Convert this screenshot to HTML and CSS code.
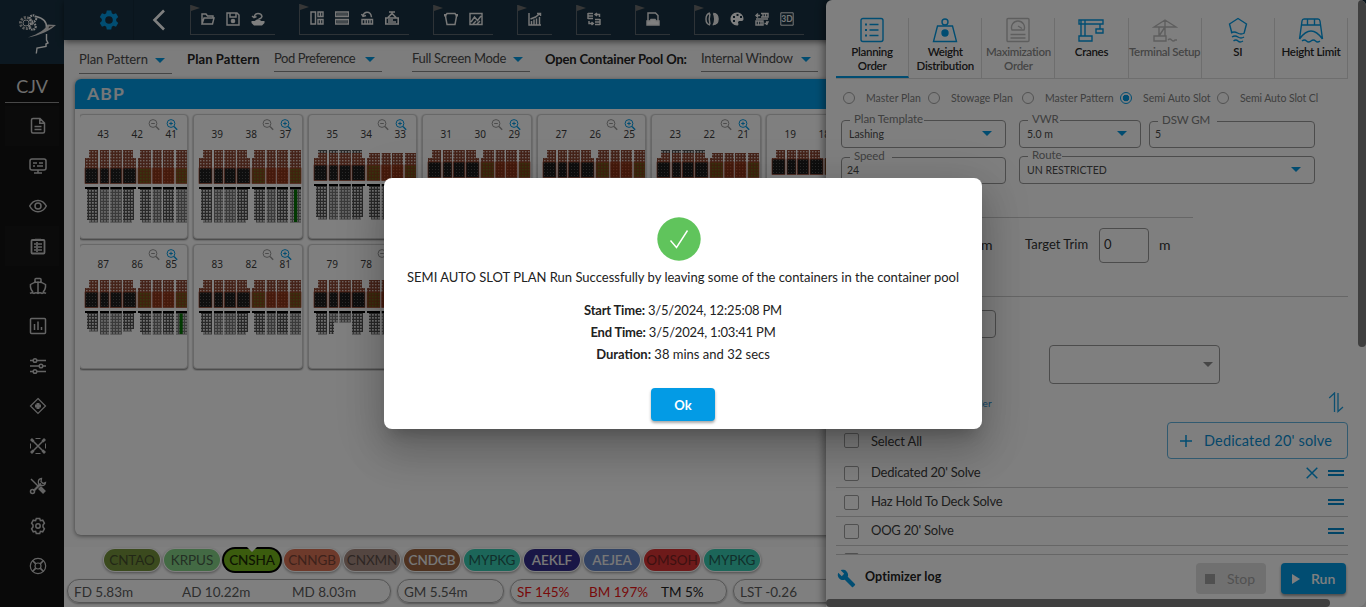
FILE: index.html
```html
<!DOCTYPE html>
<html lang="en">
<head>
<meta charset="utf-8">
<title>CJV Stowage Planner</title>
<link rel="stylesheet" href="styles.css">
</head>
<body>
<svg class="defs" width="0" height="0" aria-hidden="true">
  <defs>
    <pattern id="p-deck" width="3" height="3" patternUnits="userSpaceOnUse"><rect width="3" height="3" fill="#8a4633"/><rect x="1" y="1" width="1.5" height="1.4" fill="#dcc4bc"/></pattern>
    <pattern id="p-dark" width="3" height="3" patternUnits="userSpaceOnUse"><rect width="3" height="3" fill="#1e1e1e"/><rect x="1" y="1" width="1" height="1" fill="#545454"/></pattern>
    <pattern id="p-red" width="3" height="3" patternUnits="userSpaceOnUse"><rect width="3" height="3" fill="#8a3418"/><rect x="1" y="1" width="1.3" height="1.3" fill="#b4583c"/></pattern>
    <pattern id="p-green" width="3" height="3" patternUnits="userSpaceOnUse"><rect width="3" height="3" fill="#83451c"/><rect x="1" y="1" width="1.6" height="1.6" fill="#6c6c1c"/></pattern>
    <pattern id="p-hold" width="3" height="3" patternUnits="userSpaceOnUse"><rect width="3" height="3" fill="#505050"/><rect x="1" y="1" width="1.8" height="1.7" fill="#e0e0e0"/></pattern>
    <pattern id="p-hold2" width="3" height="3" patternUnits="userSpaceOnUse"><rect width="3" height="3" fill="#747474"/><rect x="1" y="1" width="1.9" height="1.8" fill="#cccccc"/></pattern>
  </defs>
</svg>
<div class="app">
  <aside class="side">
    <div class="logo">
      <svg width="40" height="42" viewBox="0 0 40 42" fill="none" stroke="#fff">
        <circle cx="8" cy="11" r="5.5" stroke-width="3" stroke-dasharray="2 1.3" stroke="#bbb"/><circle cx="8" cy="11" r="3" stroke="#ddd"/>
        <circle cx="15" cy="6.500" r="3.200" stroke-width="2.200" stroke-dasharray="1.600 .8"/><circle cx="14.500" cy="14.500" r="3.200" stroke-width="2.200" stroke-dasharray="1.600 .8"/>
        <path d="M18 4.500C25 6 29 10 28.500 16M28.500 22v6l1.500 3-2 1v2.500l-9 1.500-.7 5.500" stroke-width="1.400"/>
        <path d="M10 25.500C20 22 28 17 29.500 12.500l8.500.5c-5 5-15 10-28 12.500z" fill="#ddd" stroke="none"/><path d="M31 14.500l4-.5-4.500 2.500z" fill="#333" stroke="none"/>
      </svg>
    </div>
    <div class="vessel">CJV</div>
    <nav class="nav">
      <a class="on"><svg viewBox="0 0 18 18"><path d="M4 1.500h7l4.500 4.500v8.500q0 1.500-1.500 1.500H4q-1.500 0-1.500-1.500V3Q2.500 1.500 4 1.500zM10.800 1.500v4.700h4.700M5.500 9.500h7M5.500 12.500h7"/></svg></a>
      <a><svg viewBox="0 0 18 18"><rect x="1" y="2" width="16" height="11" rx="2"/><path d="M4 6h4M10 6h4M4 9h2M8 9h6M9 13v3M5 16h8"/></svg></a>
      <a><svg viewBox="0 0 18 18"><path d="M.7 9C4.500 1.500 13.500 1.500 17.300 9 13.500 16.500 4.500 16.500.7 9z"/><circle cx="9" cy="9" r="3"/></svg></a>
      <a class="on"><svg viewBox="0 0 18 18"><rect x="2.500" y="3" width="13" height="13.500" rx="1" stroke-width="1.800"/><path d="M6 2.500h6M5 7h2M9 7h4M5 10h2M9 10h4M5 13h2M9 13h4M8 5v10" stroke-width="1.700"/></svg></a>
      <a><svg viewBox="0 0 18 18"><path d="M6 5.500V2.500q0-1 1-1h4q1 0 1 1v3M9 5v11M4 15Q1 12 1.500 7.500Q5 5 9 5t7.500 2.500Q17 12 14 15M1 16.300q2-1.300 4 0 2-1.300 4 0 2-1.300 4 0 2-1.300 4 0"/></svg></a>
      <a><svg viewBox="0 0 18 18"><rect x="1.500" y="1.500" width="15" height="15" rx="1"/><path d="M5.500 7v6M9 4.500V13M12.500 10v3"/></svg></a>
      <a><svg viewBox="0 0 18 18"><path d="M1 3.500h3M8 3.500h9M1 9h9M14 9h3M1 14.500h3M8 14.500h9"/><circle cx="6" cy="3.500" r="1.800"/><circle cx="12" cy="9" r="1.800"/><circle cx="6" cy="14.500" r="1.800"/></svg></a>
      <a><svg viewBox="0 0 18 18"><path d="M9 1.500L16.500 9 9 16.500 1.500 9z" stroke-width="1.200"/><path d="M9 6v6M6 9h6" stroke-width="3"/></svg></a>
      <a><svg viewBox="0 0 18 18"><path d="M2.500 2.500l13 13M15.500 2.500l-13 13" /><path d="M2 2l2.500 2.500M16 2l-2.500 2.500M2 16l2.500-2.500M16 16l-2.500-2.500" stroke-width="2.800"/><path d="M6.500 1.500h5M6.500 16.500h5M1.500 6.500v5M16.500 6.500v5" stroke-width="1"/></svg></a>
      <a><svg viewBox="0 0 18 18"><path d="M2 2l8 8" stroke-width="1.500"/><path d="M10.500 10.500l5 5" stroke-width="4"/><path d="M4.500 14L12 6.500" stroke-width="2.200"/><path d="M12.500 1.500a3.600 3.600 0 1 0 4 4l-2.500 1-2-2z" stroke-width="1.300"/><circle cx="3.500" cy="14.500" r="2"/></svg></a>
      <a><svg viewBox="0 0 18 18"><path d="M7.300 1.500h3.400l.7 2.200 2.300-.5 1.700 3L14 8v2l1.400 1.800-1.700 3-2.300-.5-.7 2.200H7.300l-.7-2.200-2.300.5-1.700-3L4 10V8L2.600 6.200l1.700-3 2.300.5z"/><circle cx="9" cy="9" r="2.200"/></svg></a>
      <a><svg viewBox="0 0 18 18"><circle cx="9" cy="9" r="7.700" stroke-width="1.200"/><circle cx="9" cy="9" r="3" stroke-width="1.200"/><path d="M3.500 3.500l3.300 3.300M14.500 3.500l-3.300 3.300M3.500 14.500l3.300-3.300M14.500 14.500l-3.300-3.300" stroke-width="1.700"/></svg></a>
    </nav>
  </aside>
  <main class="main">
    <header class="top">
      <div class="gear"><svg width="20" height="20" viewBox="0 0 20 20"><path fill="#039be5" fill-rule="evenodd" d="M7.800.6h4.400l.6 2.700 1.500.9 2.700-.9 2.200 3.800-2 1.900v2l2 1.900-2.200 3.800-2.700-.9-1.500.9-.6 2.700H7.800l-.6-2.700-1.500-.9-2.700.9L.8 12.900l2-1.900V9l-2-1.900L3 3.300l2.700.9 1.500-.9zM10 6.200a3.800 3.800 0 1 0 0 7.600 3.800 3.800 0 0 0 0-7.600z"/></svg></div>
      <svg class="back" width="14" height="22" viewBox="0 0 14 22"><path d="M12 1.500L2.500 11 12 20.500" fill="none" stroke="#fff" stroke-width="2.600"/></svg>
      <div class="tools">
        <div class="grp g3"><svg viewBox="0 0 14 14"><path d="M1 12V2h4l1.500 2H12v2M1 12l2-6h10l-1.500 6z"/></svg><svg viewBox="0 0 14 14"><path d="M1 1h10l2 2v10H1zM4 1v4h6V1"/><circle cx="7" cy="9" r="1.600" fill="#fff"/></svg><svg viewBox="0 0 14 14"><path d="M3 5q1-3.500 4-3.500 3.500 0 4 3-1 2.500-3.500 2.500M1 4l2 1.700L5.500 4.500"/><path fill="#fff" stroke="none" d="M.5 9h3.200q3.300-3.500 6.600 0h3.200v2L11 13.500H3L.5 11z"/></svg></div>
        <div class="grp g4 tall"><svg viewBox="0 0 14 14"><path d="M1 1h4.500v12H1zM8 1h5v4.500H8zM8 8.500h5V13H8zM10.500 1v4M10.500 9v4"/></svg><svg viewBox="0 0 14 14"><path d="M.7 1h12.600v4.500H.7zM.7 8.500h12.600V13H.7z"/><path d="M3 2v3M5 2v3M7 2v3M9 2v3M11 2v3M3 9v3M5 9v3M7 9v3M9 9v3M11 9v3" stroke-width="1"/></svg><svg viewBox="0 0 14 14"><path d="M2 13V8.500h10.500V13zM5 9v4M7.500 9v4M10 9v4M3 4.500Q4 1.200 7 1.200q4 0 4.500 5M1.500 3l1.500 2.500L6 4.500"/></svg><svg viewBox="0 0 14 14"><path d="M.8 7h12.400v6H.8zM3 9h5M3 11h8M3 6.500l4-4 4 4M4 1h6M7 1v3" stroke-width="1.600"/></svg></div>
        <div class="grp g2"><svg viewBox="0 0 14 14"><path d="M.7 4.500V2.700h1.600L3 1.500h8l.7 1.200h1.600v1.800M1.700 3v2.500L3 12.500h8l1.300-7V3"/></svg><svg viewBox="0 0 14 14"><path d="M1 1.500h12v11H1zM2 10l3.500-5 3 3.500L12 4M4 12l3-3M8 12l3-3"/></svg></div>
        <div class="grp g1"><svg viewBox="0 0 14 14"><path d="M1 1v12h12M3.500 13V9M6 13V7.500M8.500 13V6.500M11.500 13V5M2.500 7l5-2L12 1.500M9 1.500h3.500V4"/></svg></div>
        <div class="grp g1"><svg viewBox="0 0 14 14"><path d="M1 1.500h5M1 4h5M1 6.500h5M1 1v6M8 7.500h5M8 10h5M8 12.500h5M13 7v6M8 2.500h4.500V5M10 1L8 2.500l2 1.500M6 11.500H2V9M4.500 10l1.800 1.500L4.500 13"/></svg></div>
        <div class="grp g1"><svg viewBox="0 0 14 14"><path d="M2 11V1h7.500L12 3.500V11"/><path fill="#fff" d="M1 9h3l1-1.500h4L10 9h3v4H1z"/></svg></div>
        <div class="grp g4"><svg viewBox="0 0 14 14"><path d="M5 1Q1 2 1 7t4 6M5 1.500Q3.500 7 5 12.500M8.500 1.500Q11 7 8.500 12.500Q13 12 13 7T8.500 1.500"/><path fill="#fff" d="M9.500 2q3 1 3 5t-3 5q2-5 0-10z"/></svg><svg viewBox="0 0 14 14"><path fill="#fff" stroke="none" fill-rule="evenodd" d="M7 .5C3 .5.5 3.500.5 7S3.500 13.500 7 13.500c2 0 1.500-2 1-3 0-1 .8-1.500 2-1.500h1.800c1 0 1.700-.8 1.700-2C13.500 3 10.500.5 7 .5zM3 4h2v2H3zM3 8h2v2H3zM6.500 2h2v2h-2zM10 4h2v2h-2z"/></svg><svg viewBox="0 0 14 14"><path d="M6 1.500h7v3.500H6M8 1.500v4M10.500 1.500v4M1 9h7v4H1zM3.500 9v4M6 9v4M1 3.500h4M3 1.500L1 3.500l2 2M9.500 11.500H13M11.500 13l1.500-3-2 0M1 7h12"/></svg><svg viewBox="0 0 14 14"><path d="M.8.8h12.400v12.400H.8z" stroke-width="1"/><text x="7" y="10.400">3D</text></svg></div>
      </div>
    </header>
    <div class="bar">
      <div class="sel s1"><span>Plan Pattern</span><i class="tri"></i></div>
      <b class="b1">Plan Pattern</b>
      <div class="sel s2"><span>Pod Preference</span><i class="tri"></i></div>
      <div class="sel s3"><span>Full Screen Mode</span><i class="tri"></i></div>
      <b class="b2">Open Container Pool On:</b>
      <div class="sel s4"><span>Internal Window</span><i class="tri"></i></div>
    </div>
    <section class="plan">
      <h1>ABP</h1>
      <div class="bays" id="bays"></div>
    </section>
    <footer class="foot">
      <div class="pods">
        <span class="pod tao">CNTAO</span><span class="pod pus">KRPUS</span><span class="pod sha">CNSHA</span><span class="pod ngb">CNNGB</span><span class="pod xmn">CNXMN</span><span class="pod dcb">CNDCB</span><span class="pod pkg">MYPKG</span><span class="pod klf">AEKLF</span><span class="pod jea">AEJEA</span><span class="pod soh">OMSOH</span><span class="pod pkg">MYPKG</span>
      </div>
      <div class="stats">
        <div class="stat d1"><span>FD 5.83m</span><span>AD 10.22m</span><span>MD 8.03m</span></div>
        <div class="stat d2"><span>GM 5.54m</span></div>
        <div class="stat d3"><span class="bad">SF 145%</span><span class="bad">BM 197%</span><span class="ok">TM 5%</span></div>
        <div class="stat d4"><span>LST -0.26</span></div>
      </div>
    </footer>
  </main>

  <aside class="panel">
    <div class="pbody">
      <div class="tabs">
        <div class="tab active"><svg viewBox="0 0 26 26"><rect x="2" y="1.500" width="22" height="23" rx="2"/><path d="M10.500 7.500h9M10.500 13h9M10.500 18.500h9"/><path d="M6 7.500h2M6 13h2M6 18.500h2" stroke-width="2.200"/></svg>Planning<br>Order</div>
        <div class="tab"><svg viewBox="0 0 26 26"><path d="M5.500 9h15l4 15.500h-23z"/><circle cx="13" cy="5" r="3"/><circle cx="13" cy="16" r="3" fill="#039be5"/></svg>Weight<br>Distribution</div>
        <div class="tab off"><svg viewBox="0 0 26 26"><rect x="2" y="1.500" width="22" height="23" rx="1"/><path d="M7 13a6.500 6.500 0 1 1 12 0zM13 9l4 2.500M5.500 17.500h15M5.500 21h15"/></svg>Maximization<br>Order</div>
        <div class="tab"><svg viewBox="0 0 26 26"><path d="M1 3h24v4H1zM3 3v16M7 3v16M1 19h13v5H1zM22 7v5M18 12h7v4h-7z"/></svg>Cranes</div>
        <div class="tab off"><svg viewBox="0 0 26 26"><path d="M2 10L13 3l11 7zM13 3v7M7 10v9M13 10v9M7 19l6-9M2 19h12v5H2zM16 23q2-2 3.500 0 2 2 3.500 0l2 0"/></svg>Terminal Setup</div>
        <div class="tab"><svg viewBox="0 0 26 26"><path d="M7 16.500L4.500 7 13 1.500 21.500 7 19 16.500M6 16q3-2 6.500 0t7 0M7 20q3-2 6 0t6 0M8.500 24q2.500-2 4.500 0t5 0"/></svg>SI</div>
        <div class="tab"><svg viewBox="0 0 26 26"><path d="M1.500 22L4 4q.3-2 2-2h14q1.700 0 2 2l2.500 18M4 8h18M9.500 2v6M16.500 2v6M1.500 22Q13 6 24.500 22M4 24q2.500-2 4.500 0t4.500 0 4.500 0 4.500 0"/></svg>Height Limit</div>
      </div>
      <div class="radios">
        <label class="r1"><i></i>Master Plan</label><label class="r2"><i></i>Stowage Plan</label><label class="r3"><i></i>Master Pattern</label><label class="r4 on"><i></i>Semi Auto Slot</label><label class="r5"><i></i>Semi Auto Slot Cl</label>
      </div>
      <div class="fields">
        <div class="fld"><em>Plan Template</em><span>Lashing</span><i class="tri"></i></div>
        <div class="fld"><em>VWR</em><span>5.0 m</span><i class="tri"></i></div>
        <div class="fld txt"><em>DSW GM</em><span>5</span></div>
        <div class="fld txt"><em>Speed</em><span>24</span></div>
        <div class="fld wide"><em>Route</em><span>UN RESTRICTED</span><i class="tri"></i></div>
      </div>
      <div class="trim"><span class="m">m</span><span class="tt">Target Trim</span><span class="inp">0</span><span class="m">m</span></div>
      <div class="opts">
        <div class="small"></div>
        <div class="drop"><i class="tri grey"></i></div>
        <div class="order"><span>der</span><svg width="16" height="21" viewBox="0 0 16 21"><path d="M6.500 20V1L1.200 6M10 1v18.500l5-4.500" fill="none" stroke="#1a9ee0" stroke-width="1.300"/></svg></div>
      </div>
      <div class="all"><i class="chk"></i><span>Select All</span><button class="add"><svg width="12" height="12" viewBox="0 0 12 12"><path d="M6 0v12M0 6h12" stroke="#039be5" stroke-width="1.500"/></svg>Dedicated 20' solve</button></div>
      <ul class="list">
        <li><i class="chk"></i><span>Dedicated 20' Solve</span><svg class="x" width="12" height="12" viewBox="0 0 12 12"><path d="M.7.7l10.600 10.600M11.300.7L.7 11.300" stroke="#039be5" stroke-width="1.500"/></svg><i class="drag"></i></li>
        <li><i class="chk"></i><span>Haz Hold To Deck Solve</span><i class="drag"></i></li>
        <li><i class="chk"></i><span>OOG 20' Solve</span><i class="drag"></i></li>
        <li><i class="chk"></i></li>
      </ul>
      <div class="actions">
        <svg width="19" height="19" viewBox="0 0 24 24"><path fill="#039be5" d="M22.700 19l-9.100-9.100c.9-2.300.4-5-1.500-6.900-2-2-5-2.400-7.400-1.300L9 6 6 9 1.600 4.700C.4 7.100.9 10.100 2.900 12.100c1.900 1.900 4.600 2.400 6.900 1.500l9.100 9.100c.4.400 1 .4 1.400 0l2.300-2.300c.5-.4.5-1.100.1-1.400z"/></svg>
        <b>Optimizer log</b>
        <button class="stop"><i></i>Stop</button><button class="run"><i></i>Run</button>
      </div>
    </div>
    <div class="vbar"></div><div class="hbar"></div>
  </aside>
</div>

<div class="overlay">
  <div class="modal">
    <svg class="tick" width="44" height="44" viewBox="0 0 44 44"><circle cx="22" cy="22" r="21.700" fill="#60c45c"/><path d="M13.500 23.500l6 7L30.500 13.500" fill="none" stroke="#fff" stroke-width="1.400"/></svg>
    <p class="msg">SEMI AUTO SLOT PLAN Run Successfully by leaving some of the containers in the container pool</p>
    <p class="time"><b>Start Time:</b> 3/5/2024, 12:25:08 PM</p>
    <p class="time"><b>End Time:</b> 3/5/2024, 1:03:41 PM</p>
    <p><b>Duration:</b> 38 mins and 32 secs</p>
    <button>Ok</button>
  </div>
</div>
<script src="bays.js"></script>
</body>
</html>
```
FILE: styles.css
```css
* { box-sizing: border-box; }
body { margin: 0; width: 1366px; height: 607px; overflow: hidden; position: relative; font-family: Lato, "Open Sans", sans-serif; font-size: 13px; color: #3c3c3c; }
button { font: inherit; border: 0; padding: 0; }
p, h1, ul { margin: 0; padding: 0; }
.defs { position: absolute; }
.app { display: flex; width: 1366px; height: 607px; position: relative; background: #fafafa; }

.side { width: 64px; background: #131313; flex: none; }
.logo { height: 64px; background: #183142; padding: 12px 0 0 18px; }
.logo svg { display: block; }
.vessel { height: 39px; margin: 0 5px; border-bottom: 1px solid #909090; color: #dcdcdc; font-size: 18px; line-height: 44px; text-align: center; letter-spacing: -.1px; }
.nav { padding: 3px 5px 0; }
.nav a { display: flex; height: 40px; padding-left: 24px; align-items: center; }
.nav a.on { background: #161616; }
.nav svg { width: 18px; height: 18px; fill: none; stroke: #c8c8c8; stroke-width: 1.5; }

.main { flex: 1; display: flex; flex-direction: column; min-width: 0; }
.top { height: 40px; flex: none; background: #183142; display: flex; box-shadow: 0 2px 6px rgba(0,0,0,.5); position: relative; }
.gear { width: 70px; padding: 10px 0 0 35px; border-right: 1px solid #152b3b; }
.back { margin: 9px 0 0 18px; }
.tools { display: flex; gap: 24px; padding: 5px 0 0 24px; }
.grp { height: 30px; border: solid #5c666e; border-width: 0 0 1px 1px; display: flex; gap: 11px; padding: 7px 0 0 10px; position: relative; }
.grp::before { content: ""; position: absolute; left: 0; top: 0; border: solid transparent; border-width: 3px 0 3px 9px; border-left-color: #6c6c6c; }
.grp.tall { height: 31px; margin-top: -1px; }
.g1 { width: 35px; } .g2 { width: 60px; } .g3 { width: 85px; } .g4 { width: 110px; }
.grp svg { width: 14px; height: 14px; fill: none; stroke: #f0f0f0; stroke-width: 1.45; flex: none; }
.grp text { font: bold 8.5px Lato, sans-serif; fill: #eee; stroke: none; text-anchor: middle; }

.bar { height: 39px; flex: none; display: flex; padding-left: 15px; white-space: nowrap; color: #4a4a4a; }
.tri { width: 0; height: 0; border: 5px solid transparent; border-top-color: #0398e0; border-bottom: 0; }
.tri.grey { border-top-color: #8c8c8c; }
.sel { display: flex; justify-content: space-between; align-items: center; height: 32px; padding: 4px 7px 0 0; border-bottom: 1px solid #8a8a8a; letter-spacing: -.3px; }
.sel .tri { margin-top: 4px; }
.s1 { width: 93px; height: 34px; letter-spacing: -.1px; }
.s2 { width: 108px; letter-spacing: -.42px; } .s3 { width: 118px; margin-left: 30px; } .s4 { width: 117px; letter-spacing: -.25px; }
.bar b { color: #222; line-height: 39px; }
.b1 { width: 102px; padding-left: 15px; letter-spacing: .1px; }
.b2 { width: 171px; padding-left: 15px; letter-spacing: -.15px; }

.plan { margin-left: 11px; height: 456px; background: #fff; border-radius: 6px 0 0 6px; box-shadow: 0 1px 4px rgba(0,0,0,.5); overflow: hidden; flex: none; }
.plan h1 { height: 30px; background: #039be5; color: #e8eef2; font-size: 17.500px; letter-spacing: 1.1px; line-height: 30px; padding-left: 12px; }
.bays { margin: 3px 0 0 5px; padding: 2px 0; display: grid; grid-template-columns: repeat(7, 109px); column-gap: 5.600px; row-gap: 5px; overflow: hidden; width: 746px; }
.bay { height: 125px; width: 109.500px; margin-left: -1.500px; border: 1px solid #d0d0d0; border-radius: 4px; box-shadow: 0 1px 2px rgba(0,0,0,.55); background: #fff; overflow: hidden; }
.bay svg { display: block; }
.bay text { font: 10px "Noto Sans", sans-serif; fill: #3c3c3c; }

.foot { margin-top: 12px; height: 60px; background: #fff; flex: none; }
.pods { display: flex; gap: 4px; padding: 2px 0 0 40px; }
.pod { width: 56px; height: 22px; border-radius: 11px; box-shadow: 0 0 0 1px #fff, 0 1px 3px 1px rgba(0,0,0,.4); text-align: center; line-height: 23px; font-size: 13.500px; color: #4c4c4c; letter-spacing: -.1px; }
.tao { background: #76953c; color: #454f2c; } .pus { background: #86d488; color: #476048; } .ngb { background: #dc7456; color: #7b4436; }
.sha { background: #76b81c; color: #1a2a05; font-weight: 500; box-shadow: 0 0 0 2px #000; position: relative; }
.sha::after { content: ""; position: absolute; left: 22px; top: -3px; border: solid transparent; border-width: 6px 6px 0; border-top-color: #fff; }
.xmn { background: #a88c82; color: #5c4c48; } .dcb { background: #9c6540; } .pkg { background: #38cdb2; color: #225f56; }
.klf { background: #332c8c; } .jea { background: #6486c8; } .soh { background: #dc3434; color: #7a2222; }
.dcb, .klf, .jea { color: #eee; font-weight: 600; }
.stats { display: flex; gap: 6px; padding: 8px 0 0 3px; }
.stat { height: 24px; border: 1px solid #aaa; border-radius: 12px; box-shadow: 0 1px 2px rgba(0,0,0,.35); display: flex; line-height: 24px; padding-left: 6px; font-size: 13.500px; color: #5c5c5c; white-space: nowrap; flex: none; }
.stat span { flex: none; }
.d1 { width: 324px; } .d1 span { width: 108px; } .d1 span:nth-child(2) { width: 110px; } .d2 { width: 107px; } .d3 { width: 217px; } .d3 span { width: 72px; } .d4 { width: 110px; }
.stat .bad { color: #f01414; } .stat .ok { color: #222; }

.panel { position: absolute; left: 826px; top: 0; width: 540px; height: 607px; background: #fff; border-radius: 6px 6px 8px 0; box-shadow: -2px 0 8px rgba(0,0,0,.45); overflow: hidden; }
.pbody { padding: 18px 18px 0 10px; }
.tabs { display: grid; grid-template-columns: repeat(7, minmax(0, 1fr)); height: 61px; border-bottom: 1px solid #dcdcdc; }
.tab { border-right: 1px solid #dcdcdc; text-align: center; font-size: 11.500px; line-height: 14px; font-weight: 600; color: #282828; letter-spacing: -.3px; white-space: nowrap; }
.tab svg { display: block; width: 26px; height: 26px; margin: 0 auto 1px; fill: none; stroke: #039be5; stroke-width: 1.400; position: relative; top: -1px; }
.tab.off { color: #8b8b8b; } .tab.off svg { stroke: #bdbdbd; }
.tab.active { border-bottom: 2px solid #039be5; }
.radios { display: flex; height: 37px; padding-left: 7px; font-size: 10.500px; color: #808080; white-space: nowrap; }
.radios label { display: flex; align-items: center; }
.radios i { width: 12px; height: 12px; border: 1px solid #a5a5a5; border-radius: 50%; margin-right: 11px; flex: none; }
.r1 { width: 85px; } .r2 { width: 94px; } .r3 { width: 98px; } .r4 { width: 97px; } .radios .r5 { letter-spacing: -.1px; }
.radios .on i { border-color: #039be5; background: radial-gradient(#039be5 3px, transparent 3.600px); }
.fields { display: grid; grid-template-columns: 165px 122px 166px; grid-auto-rows: 28px; row-gap: 8px; justify-content: start; padding: 4px 0 0 5px; }
.fld { position: relative; border: 1px solid #999; border-radius: 4px; display: flex; align-items: center; justify-content: space-between; padding: 0 13px 1px 7px; font-size: 10.500px; color: #4c4c4c; }
.fld:nth-child(2), .wide { margin-left: 13px; margin-right: -13px; }
.fld:nth-child(3) { margin-left: 21px; margin-right: -21px; }
.fld.wide { grid-column: 2 / 4; margin-right: -21px; }
.txt { padding-left: 5px; margin-top: 1px; }
.fld em { position: absolute; left: 8px; top: -9px; padding: 0 1px 0 4px; background: #fff; font-style: normal; font-size: 11.500px; line-height: 14px; color: #808080; white-space: nowrap; letter-spacing: -.1px; }
.txt em { padding-right: 7px; }
.trim { margin: 33px 0 0 5px; height: 80px; width: 507px; display: flex; padding: 11px 0 0 140px; line-height: 33px; color: #333; border-bottom: 1px solid #ccc; background: linear-gradient(#ccc, #ccc) no-repeat 0 0 / 352px 1px; }
.m { font-size: 14px; width: 11px; }
.tt { margin-left: 33px; width: 74px; }
.inp { width: 50px; height: 35px; border: 1px solid #999; border-radius: 4px; padding-left: 4px; margin-right: 10px; line-height: 31px; }
.opts { height: 125px; padding-left: 5px; display: grid; grid-template-rows: 35px 47px 31px; padding-top: 13px; }
.small { width: 155px; height: 28px; border: 1px solid #999; border-radius: 4px; }
.drop { margin-left: 208px; width: 171px; height: 39px; border: 1px solid #999; border-radius: 4px; display: flex; align-items: center; justify-content: flex-end; padding-right: 6px; }
.order { display: flex; justify-content: space-between; padding: 0 4px 0 136px; color: #2a8fd0; font-size: 10px; line-height: 23px; }
.all { height: 37px; display: flex; align-items: center; padding-left: 8px; letter-spacing: -.15px; }
.chk { width: 15px; height: 15px; border: 1.500px solid #a0a0a0; border-radius: 2px; margin-right: 12px; flex: none; }
.all span { flex: 1; }
.add { width: 181px; height: 37px; border: 1px solid #62b4e0; border-radius: 4px; background: #fff; color: #0b8fd4; font-size: 14.500px; letter-spacing: .15px; display: flex; align-items: center; padding-left: 12px; gap: 12px; white-space: nowrap; }
.list { list-style: none; height: 96px; overflow: hidden; border-bottom: 1px solid #ccc; }
.list li { height: 29px; border-bottom: 1px solid #ccc; display: flex; align-items: center; padding: 0 4px 0 8px; }
.list span { flex: 1; letter-spacing: -.22px; padding-bottom: 2px; }
.x { margin-right: 10px; }
.drag { width: 16px; height: 6px; border: solid #0388cc; border-width: 2px 0; }
.actions { display: flex; align-items: center; padding: 8px 0 0 1px; height: 39px; }
.actions b { flex: 1; margin-left: 9px; padding-bottom: 4px; font-size: 12.500px; color: #222; letter-spacing: .1px; }
.stop, .run { height: 31px; border-radius: 4px; display: flex; align-items: center; font-size: 14px; }
.stop { width: 70px; background: #e0e0e0; color: #a3a3a3; padding-left: 9px; gap: 12px; margin-right: 15px; }
.stop i { width: 10px; height: 10px; background: #a0a0a0; }
.run { width: 65px; background: #039be5; color: #fff; font-weight: 600; padding-left: 11px; gap: 11px; margin-right: 2px; box-shadow: 0 2px 3px rgba(0,0,0,.4); }
.run i { border: solid transparent; border-width: 5px 0 5px 8px; border-left-color: #fff; }
.vbar { position: absolute; right: 0; top: 0; width: 8px; height: 347px; border-radius: 4px; background: #7e7e7e; }
.hbar { position: absolute; left: 0; bottom: 0; width: 504px; height: 8px; border-radius: 4px; background: #7e7e7e; }

.overlay { position: absolute; inset: 0; background: rgba(0,0,0,.5); display: flex; justify-content: center; align-items: flex-start; padding-top: 178px; }
.modal { width: 598px; height: 251px; background: #fff; border-radius: 8px; box-shadow: 0 11px 15px -7px rgba(0,0,0,.2), 0 24px 38px 3px rgba(0,0,0,.14), 0 9px 46px 8px rgba(0,0,0,.12); padding-top: 39px; text-align: center; color: #222; white-space: nowrap; }
.tick { display: block; margin: 0 auto; position: relative; left: -4px; }
.modal p { line-height: 22px; font-size: 13px; }
.modal .msg { margin: 5px 0 11px; }
.modal .time { letter-spacing: -.2px; }
.modal button { margin-top: 23px; width: 64px; height: 33px; border-radius: 4px; background: #039be5; color: #fff; font-weight: 700; font-size: 13px; box-shadow: 0 2px 3px rgba(0,0,0,.35); }
```
FILE: bays.js
```javascript
// Bay profiles: y values are measured from the top of each card.
const rows = [
  { n: [43, 42, 41], dark: 54, deck: 69.5, hold: 108 },
  { n: [39, 38, 37], dark: 54, deck: 69.5, hold: 108, reefer: 103 },
  { n: [35, 34, 33], dark: 51, deck: 66.5, hold: 105, ragged: true },
  { n: [31, 30, 29], dark: 48, deck: 63.5, hold: 102 },
  { n: [27, 26, 25], dark: 48, deck: 63.5, hold: 102 },
  { n: [23, 22, 21], dark: 48, deck: 63.5, hold: 102, ragged: true },
  { n: [19, 18], dark: 45, deck: 60.5, hold: 99, noHold: true },
  { n: [87, 86, 85], dark: 48, deck: 63.5, hold: 90, reefer: 102.5, shortEnds: true },
  { n: [83, 82, 81], dark: 48, deck: 63.5, hold: 90 },
  { n: [79, 78, 77], dark: 48, deck: 63.5, hold: 90, gap: true }
];
const cols = [[6, 13], [21, 9], [31.3, 11.5], [44, 13], [59, 13], [73.7, 9], [84, 11], [97, 11]];

function bay(b) {
  const out = [];
  const rect = (x, y, w, h, f, extra = '') => out.push(`<rect x="${x}" y="${y}" width="${w}" height="${h}" fill="${f}" ${extra}/>`);
  cols.forEach(([x, w], i) => {
    const right = i > 3;
    const top = b.ragged && right ? 39 : 36;
    const inL = i === 0 ? 4 : i === 4 ? 2 : 0;
    const inR = i === 3 ? 3 : 0;
    if (b.ragged && !right) rect(x + inL, 36, w - inL - inR, 4, 'url(#p-hold)');
    rect(x + inL, b.ragged && !right ? 39 : top, w - inL - inR, 9, 'url(#p-deck)');
    rect(x, 44, w, b.dark - 44, 'url(#p-deck)');
    rect(x, b.dark, w, b.deck - b.dark, !right ? 'url(#p-dark)' : i === 4 || i === 7 ? 'url(#p-green)' : 'url(#p-red)',
      'stroke="#a34830" stroke-width=".7"');
    if (b.noHold) return;
    const hatch = b.deck + 3.5;
    rect(x, hatch, w, 2, '#000');
    const hi = i === 0 || i === 4 ? 2 : 0;
    const hr = i === 3 ? 2 : 0;
    let end = b.hold;
    if (b.shortEnds && (i === 0 || i === 3)) end -= 3;
    if (b.gap && (i === 1 || i === 2)) end -= 12;
    rect(x + hi, hatch + 2, w - hi - hr, end - hatch - 4, i % 4 === 0 || i === 3 || i === 6 ? 'url(#p-hold)' : 'url(#p-hold2)');
    rect(x + hi * 2, end - 2, w - hi * 2 - hr * 2, 2.5, 'url(#p-hold2)');
    if (b.gap && i === 1) rect(x, end, 5, 12, 'url(#p-hold)');
  });
  if (b.reefer) rect(b.reefer - 2, b.deck + 6, 3.2, b.hold - b.deck - 6, '#047404');
  const lens = (x, c, plus) => `<g fill="none" stroke="${c}" stroke-width="1"><circle cx="${x}" cy="9.500" r="3.900"/><path d="M${x + 3} 12.500l3.200 3.200" stroke-width="1.400"/><path d="M${x - 1.8} 9.500h3.600${plus ? `M${x} 7.700v3.600` : ''}"/></g>`;
  const nums = b.n.map((v, i) => `<text x="${18.500 + i * 34}" y="24">${v}</text>`).join('');
  return `<div class="bay"><svg width="108" height="122" viewBox="1 1 108 122">${lens(74, '#999', false)}${lens(92, '#039be5', true)}${nums}${out.join('')}</svg></div>`;
}
document.getElementById('bays').innerHTML = rows.map(bay).join('');
```
